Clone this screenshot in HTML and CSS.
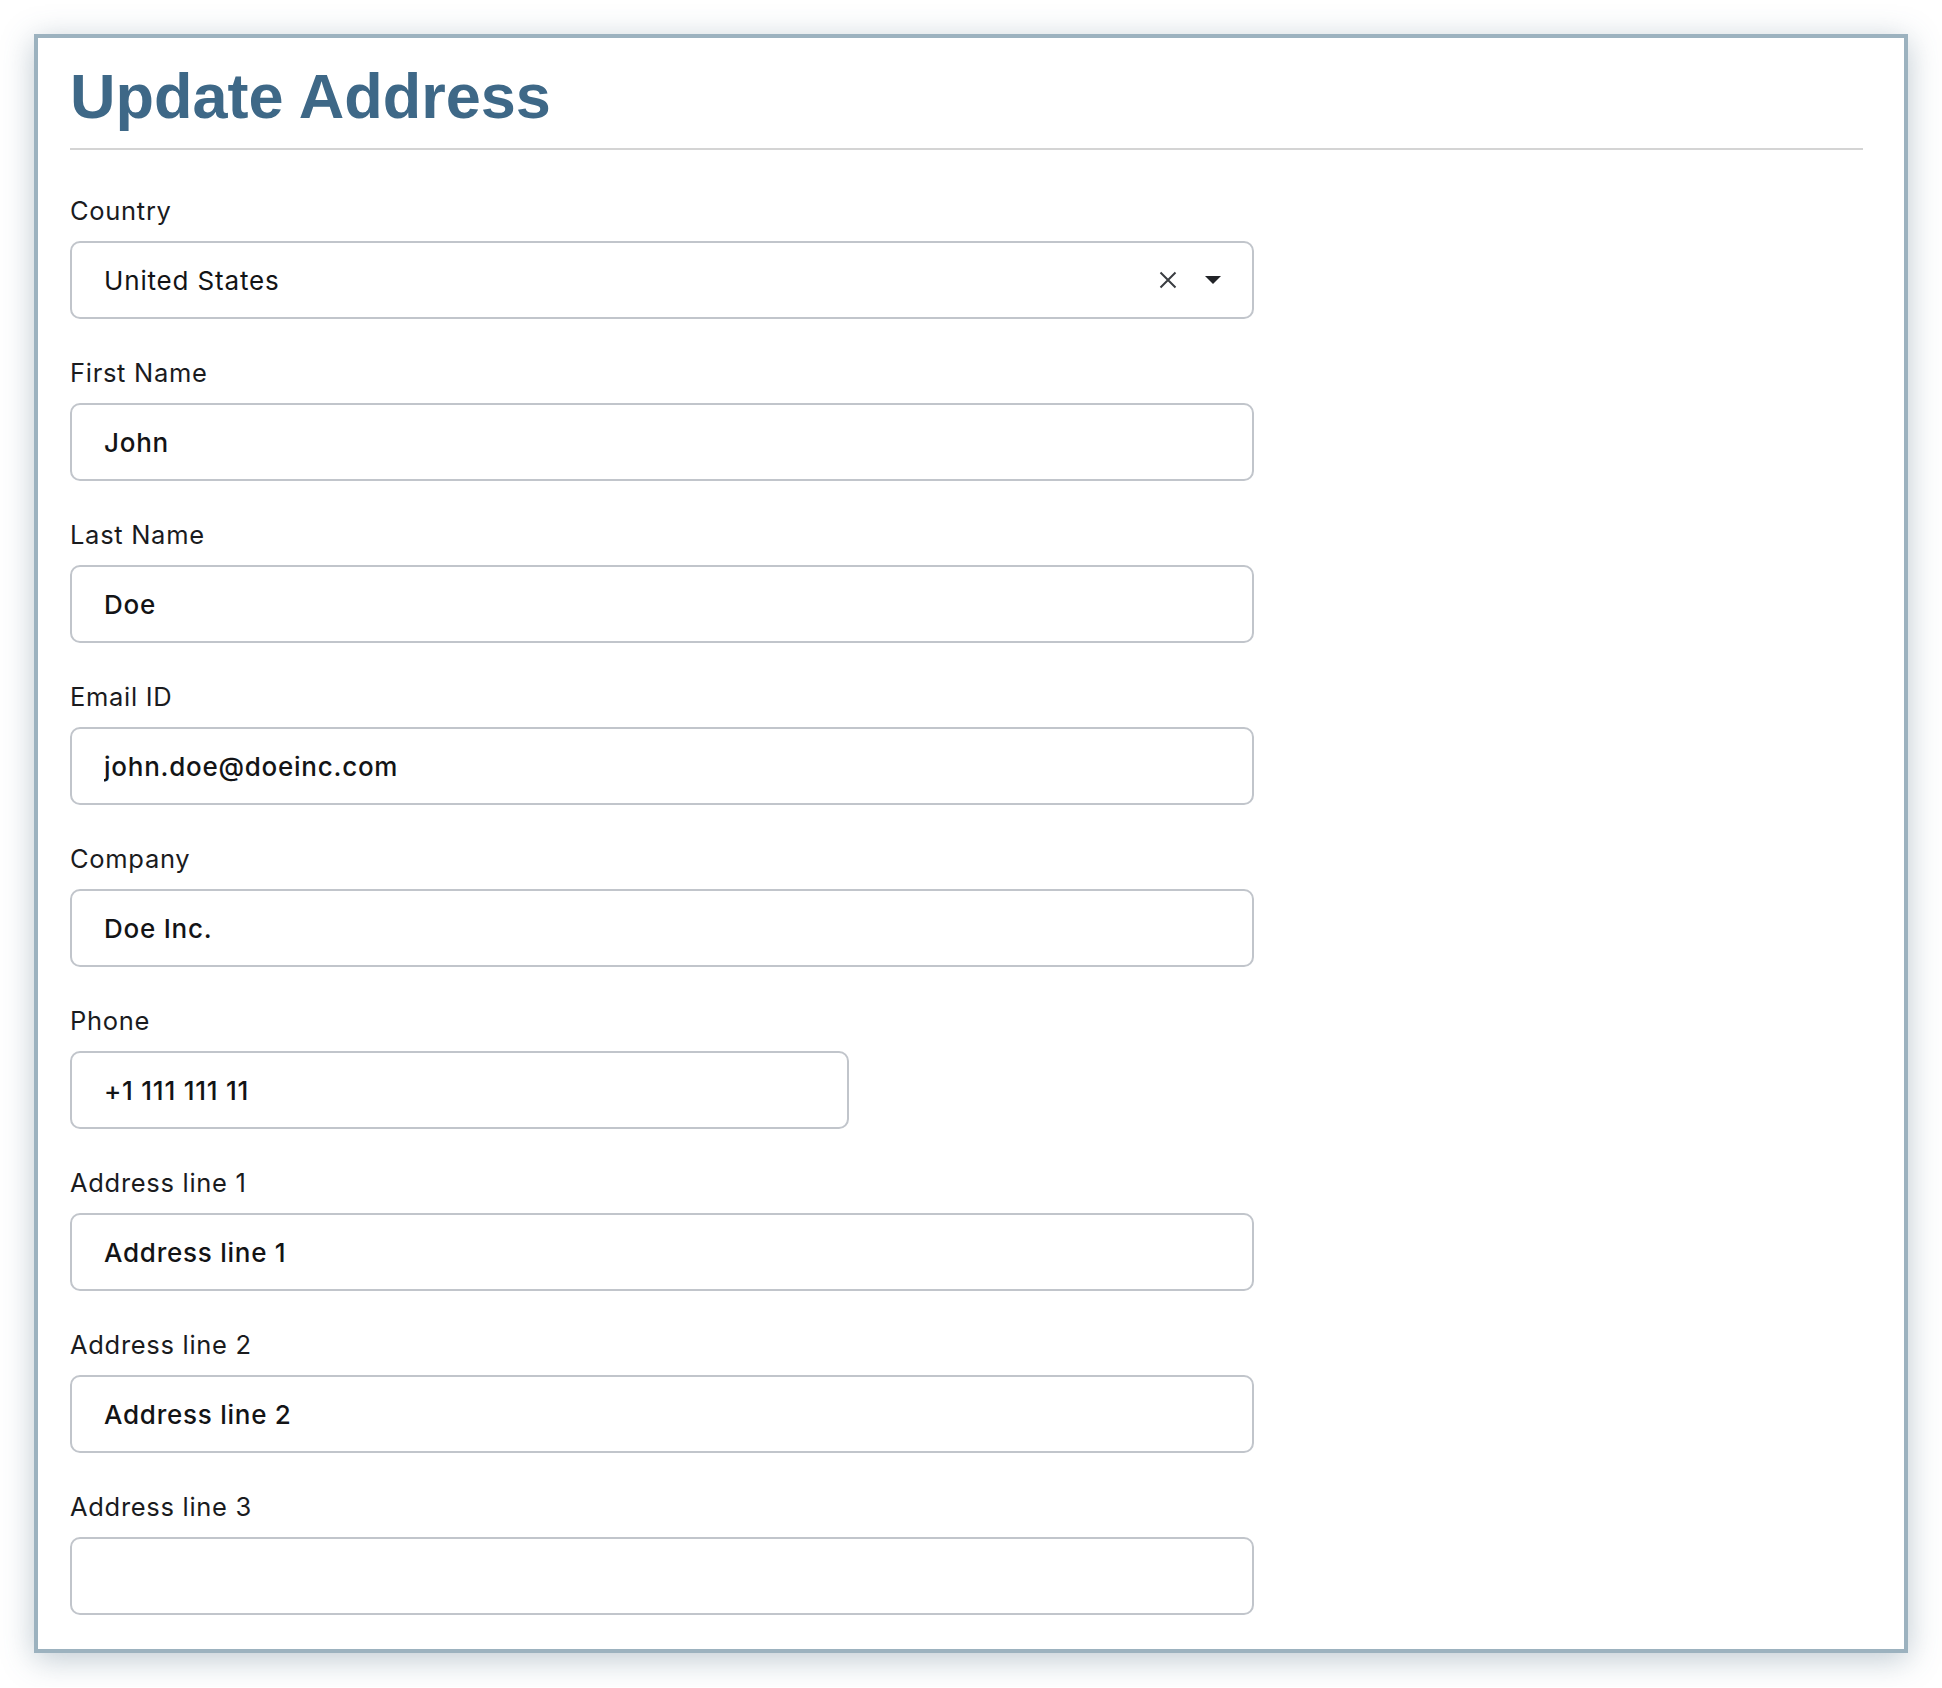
FILE: index.html
```html
<!DOCTYPE html>
<html lang="en">
<head>
<meta charset="utf-8">
<title>Update Address</title>
<link rel="stylesheet" href="styles.css">
</head>
<body>
<div class="card">
  <h1 class="title">Update Address</h1>
  <form class="form">
    <div class="field">
      <label class="label">Country</label>
      <div class="select">
        <span class="select-value">United States</span>
        <span class="select-icons">
          <svg class="clear" width="18" height="18" viewBox="0 0 18 18"><path d="M1.5 1.5 L16.5 16.5 M16.5 1.5 L1.5 16.5" stroke="#3a3d41" stroke-width="2" fill="none" stroke-linecap="butt"/></svg>
          <svg class="caret" width="16" height="8" viewBox="0 0 16 8"><path d="M0 0 H16 L8 8 Z" fill="#212327"/></svg>
        </span>
      </div>
    </div>
    <div class="field">
      <label class="label">First Name</label>
      <input class="input" type="text" value="John">
    </div>
    <div class="field">
      <label class="label">Last Name</label>
      <input class="input" type="text" value="Doe">
    </div>
    <div class="field">
      <label class="label">Email ID</label>
      <input class="input" type="text" value="john.doe@doeinc.com">
    </div>
    <div class="field">
      <label class="label">Company</label>
      <input class="input" type="text" value="Doe Inc.">
    </div>
    <div class="field">
      <label class="label">Phone</label>
      <input class="input input-short" type="text" value="+1 111 111 11">
    </div>
    <div class="field">
      <label class="label">Address line 1</label>
      <input class="input" type="text" value="Address line 1">
    </div>
    <div class="field">
      <label class="label">Address line 2</label>
      <input class="input" type="text" value="Address line 2">
    </div>
    <div class="field">
      <label class="label">Address line 3</label>
      <input class="input" type="text" value="">
    </div>
  </form>
</div>
</body>
</html>
```
FILE: styles.css
```css
html, body {
  margin: 0;
  background: #ffffff;
}

body {
  padding: 34px;
  font-family: Inter, "Noto Sans", "Liberation Sans", sans-serif;
  color: #1a1b1e;
}

.card {
  background: #ffffff;
  border: 4px solid #9cb2bf;
  box-shadow: 0 6px 30px rgba(70, 100, 122, 0.35);
  padding: 21px 41px 34px 32px;
}

.title {
  margin: 0;
  font-family: "Liberation Sans", Arial, sans-serif;
  font-weight: 700;
  font-size: 63px;
  line-height: 74px;
  color: #3e6887;
  padding-bottom: 15px;
  border-bottom: 2px solid #d4d4d4;
}

.form {
  display: flex;
  flex-direction: column;
  gap: 36px;
  padding-top: 43px;
}

.field {
  display: flex;
  flex-direction: column;
  align-items: flex-start;
}

.label {
  font-size: 25.5px;
  letter-spacing: 0.7px;
  line-height: 36px;
  margin-bottom: 12px;
  color: #1a1b1e;
}

.input,
.select {
  box-sizing: border-box;
  width: 1184px;
  height: 78px;
  border: 2px solid #c1c5cb;
  border-radius: 10px;
  padding: 0 32px;
  background: #ffffff;
  font-family: Inter, "Noto Sans", "Liberation Sans", sans-serif;
  font-size: 26px;
  letter-spacing: 0.75px;
  font-weight: 500;
  color: #131416;
  outline: none;
  margin: 0;
}

.input-short {
  width: 779px;
}

.select {
  display: flex;
  align-items: center;
  justify-content: space-between;
  padding-right: 31px;
}

.select-value {
  font-weight: 400;
  letter-spacing: 0.84px;
}

.select-icons {
  display: flex;
  align-items: center;
  gap: 28px;
}

.clear,
.caret {
  display: block;
}
```
